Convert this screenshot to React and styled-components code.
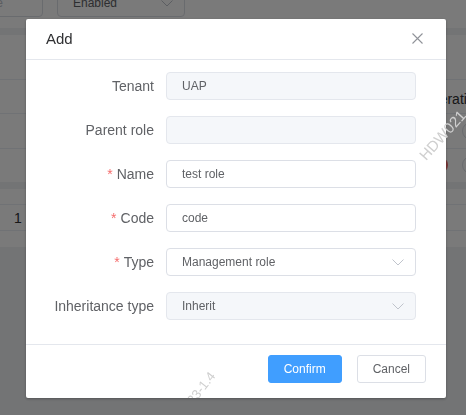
import React from 'react';
import styled, { createGlobalStyle } from 'styled-components';

const GlobalStyle = createGlobalStyle`
    html, body {
        margin: 0;
        padding: 0;
        overflow: hidden;
    }
    body {
        font-family: "Liberation Sans", Arial, sans-serif;
        color: #606266;
    }
`

// ---- page behind the dialog ----
const Page = styled.div`
    width: 466px;
    height: 415px;
    background: #f0f2f5;
    overflow: hidden;
    display: flex;
    flex-direction: column;
    gap: 7px;
`
const FilterCard = styled.div`
    background: #fff;
    height: 28px;
`
const FilterRow = styled.div`
    display: flex;
    gap: 14px;
    margin: -11px 0 0 -85px;
`
const Field = styled.div`
    box-sizing: border-box;
    width: ${p => p.$width}px;
    height: 28px;
    border: 1px solid #dcdfe6;
    border-radius: 4px;
    padding: 0 ${p => p.$padRight || 11}px 0 15px;
    display: flex;
    align-items: center;
    justify-content: ${p => (p.$right ? 'flex-end' : 'space-between')};
    font-size: 12px;
    color: ${p => (p.$placeholder ? '#c0c4cc' : '#606266')};
    background: #fff;
    white-space: nowrap;
`
const TableCard = styled.div`
    background: #fff;
    height: 147px;
    display: flex;
    flex-direction: column;
`
const Toolbar = styled.div`
    height: 45px;
`
const TableRow = styled.div`
    height: 34px;
    border-top: 1px solid #ebeef5;
    display: grid;
    grid-template-columns: 421px 1fr;
    align-items: center;
    font-size: 14px;
    color: ${p => (p.$head ? '#303133' : '#606266')};
    white-space: nowrap;
`
const HeadCell = styled.span`
    padding-top: 4px;
`
const Ops = styled.div`
    display: flex;
    gap: 14px;
    margin-left: 9px;
`
const Circle = styled.span`
    box-sizing: border-box;
    width: 18px;
    height: 18px;
    border-radius: 50%;
    background: ${p => (p.$danger ? '#f56c6c' : '#fff')};
    border: 1px solid ${p => (p.$danger ? '#f56c6c' : '#dcdfe6')};
    visibility: ${p => (p.$hidden ? 'hidden' : 'visible')};
`
const FooterCard = styled.div`
    background: #fff;
    height: 58px;
    padding-top: 15px;
    box-sizing: border-box;
`
const FooterRow = styled.div`
    height: 27px;
    border-top: 1px solid #ebeef5;
    border-bottom: 1px solid #ebeef5;
    box-sizing: border-box;
    display: flex;
    align-items: center;
    padding-left: 14px;
    font-size: 14px;
    color: #303133;
`

// ---- dialog ----
const Overlay = styled.div`
    position: fixed;
    inset: 0;
    background: rgba(0, 0, 0, 0.52);
    padding: 19px 0 0 26px;
    z-index: 10;
`
const Dialog = styled.div`
    position: relative;
    width: 420px;
    background: #fff;
    border-radius: 2px;
    box-shadow: 0 1px 3px rgba(0, 0, 0, 0.3);
    overflow: hidden;
`
const Header = styled.div`
    box-sizing: border-box;
    height: 41px;
    padding: 0 23px 2px 20px;
    border-bottom: 1px solid #e4e7ed;
    display: flex;
    align-items: center;
    justify-content: space-between;
`
const Title = styled.span`
    font-size: 15px;
    color: #303133;
`
const CloseButton = styled.button`
    border: 0;
    padding: 0;
    background: none;
    width: 11px;
    height: 11px;
    display: flex;
    cursor: pointer;
`
const Body = styled.div`
    padding: 12px 30px 8px 0;
`
const FormItem = styled.div`
    display: grid;
    grid-template-columns: 128px 1fr;
    column-gap: 12px;
    align-items: center;
    margin-bottom: 16px;
`
const Label = styled.label`
    text-align: right;
    font-size: 14px;
    color: #606266;
    white-space: nowrap;

    ${p => p.$required && `
        &::before {
            content: "*";
            color: #f56c6c;
            margin-right: 4px;
        }
    `}
`
const Input = styled.div`
    box-sizing: border-box;
    height: 28px;
    border: 1px solid ${p => (p.$disabled ? '#e4e7ed' : '#dcdfe6')};
    background: ${p => (p.$disabled ? '#f5f7fa' : '#fff')};
    border-radius: 4px;
    padding: 0 11px 0 15px;
    display: flex;
    align-items: center;
    justify-content: space-between;
    font-size: 12px;
    color: #606266;
`
const Footer = styled.div`
    border-top: 1px solid #e4e7ed;
    padding: 10px 20px 15px;
    display: flex;
    justify-content: flex-end;
    gap: 15px;
`
const Button = styled.button`
    box-sizing: border-box;
    height: 28px;
    padding: 0 15px;
    border-radius: 3px;
    font-family: inherit;
    font-size: 12px;
    border: 1px solid ${p => (p.$primary ? '#409eff' : '#dcdfe6')};
    background: ${p => (p.$primary ? '#409eff' : '#fff')};
    color: ${p => (p.$primary ? '#fff' : '#606266')};
    cursor: pointer;
`

// watermark text lying over the page and dialog
const Watermark = styled.span`
    position: absolute;
    font-size: ${p => p.$size}px;
    line-height: 1;
    color: #cfcfcf;
    white-space: nowrap;
    pointer-events: none;
    transform-origin: ${p => p.$origin};
    transform: rotate(${p => p.$angle}deg);
`

const Chevron = () => (
    <svg width="12" height="7" viewBox="0 0 12 7" fill="none">
        <polyline points="0.5,0.5 6,6 11.5,0.5" stroke="#c0c4cc" strokeWidth="1" />
    </svg>
)

const CloseIcon = () => (
    <svg width="11" height="11" viewBox="0 0 11 11">
        <path d="M0.5 0.5 L10.5 10.5 M10.5 0.5 L0.5 10.5" stroke="#909399" strokeWidth="1.1" />
    </svg>
)

const fields = [
    { label: 'Tenant', value: 'UAP', disabled: true },
    { label: 'Parent role', value: '', disabled: true },
    { label: 'Name', value: 'test role', required: true },
    { label: 'Code', value: 'code', required: true },
    { label: 'Type', value: 'Management role', required: true, select: true },
    { label: 'Inheritance type', value: 'Inherit', disabled: true, select: true },
]

const App = () => {
    return (
        <>
            <GlobalStyle />
            <Page>
                <FilterCard>
                    <FilterRow>
                        <Field $width={128} $right $padRight={39} $placeholder>Role name</Field>
                        <Field $width={128}>Enabled<Chevron /></Field>
                    </FilterRow>
                </FilterCard>
                <TableCard>
                    <Toolbar />
                    <TableRow $head>
                        <span />
                        <HeadCell>Operation</HeadCell>
                    </TableRow>
                    <TableRow>
                        <span />
                        <Ops><Circle $hidden /><Circle /></Ops>
                    </TableRow>
                    <TableRow>
                        <span />
                        <Ops><Circle $danger /><Circle /></Ops>
                    </TableRow>
                </TableCard>
                <FooterCard>
                    <FooterRow>1</FooterRow>
                </FooterCard>
            </Page>

            <Overlay>
                <Dialog>
                    <Header>
                        <Title>Add</Title>
                        <CloseButton aria-label="Close"><CloseIcon /></CloseButton>
                    </Header>
                    <Body>
                        {fields.map(f => (
                            <FormItem key={f.label}>
                                <Label $required={f.required}>{f.label}</Label>
                                <Input $disabled={f.disabled}>
                                    <span>{f.value}</span>
                                    {f.select && <Chevron />}
                                </Input>
                            </FormItem>
                        ))}
                    </Body>
                    <Footer>
                        <Button $primary>Confirm</Button>
                        <Button>Cancel</Button>
                    </Footer>
                    <Watermark $size={13} $angle={-52} $origin="100% 50%" style={{ right: 234, top: 348 }}>
                        2023-1.4
                    </Watermark>
                </Dialog>
                <Watermark $size={15} $angle={-48} $origin="0 50%" style={{ left: 422, top: 150 }}>
                    HDW021
                </Watermark>
            </Overlay>
        </>
    )
}

export default App
